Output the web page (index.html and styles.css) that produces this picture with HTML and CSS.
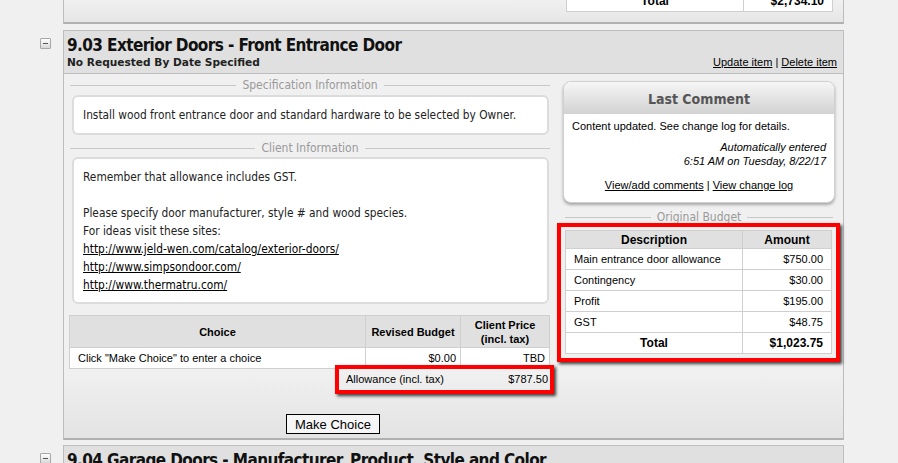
FILE: index.html
```html
<!DOCTYPE html>
<html lang="en">
<head>
    <meta charset="UTF-8">
    <title>Selections - Exterior Doors</title>
    <link rel="stylesheet" href="styles.css">
</head>
<body>

    <div class="item">
        <div class="gutter"></div>
        <div class="panel panel-prev">
            <div class="prev-body">
                <table class="budget">
                    <tr class="total-row">
                        <td class="desc">Total</td>
                        <td class="num">$2,734.10</td>
                    </tr>
                </table>
            </div>
        </div>
    </div>

    <div class="item">
        <div class="gutter"><span class="toggle"></span></div>
        <div class="panel">
            <div class="panel-head">
                <div>
                    <h2 class="item-title">9.03 Exterior Doors - Front Entrance Door</h2>
                    <div class="item-sub">No Requested By Date Specified</div>
                </div>
                <div class="item-links"><a href="#">Update item</a> | <a href="#">Delete item</a></div>
            </div>

            <div class="panel-body">
                <div class="col-left">
                    <div class="legend">Specification Information</div>
                    <div class="info-box spec-box">
                        Install wood front entrance door and standard hardware to be selected by Owner.
                    </div>

                    <div class="legend legend-client">Client Information</div>
                    <div class="info-box client-box">
                        <p>Remember that allowance includes GST.</p>
                        <p>&nbsp;</p>
                        <p>Please specify door manufacturer, style # and wood species.</p>
                        <p>For ideas visit these sites:</p>
                        <p><a href="#">http://www.jeld-wen.com/catalog/exterior-doors/</a></p>
                        <p><a href="#">http://www.simpsondoor.com/</a></p>
                        <p><a href="#">http://www.thermatru.com/</a></p>
                    </div>

                    <table class="choices">
                        <tr>
                            <th class="c-choice">Choice</th>
                            <th class="c-budget">Revised Budget</th>
                            <th class="c-price">Client Price<br>(incl. tax)</th>
                        </tr>
                        <tr>
                            <td>Click "Make Choice" to enter a choice</td>
                            <td class="num">$0.00</td>
                            <td class="num">TBD</td>
                        </tr>
                    </table>

                    <div class="allowance highlight">
                        <span>Allowance (incl. tax)</span>
                        <span>$787.50</span>
                    </div>

                    <button class="make-choice">Make Choice</button>
                </div>

                <div class="col-right">
                    <div class="comment-box">
                        <div class="comment-head">Last Comment</div>
                        <div class="comment-body">
                            <p>Content updated. See change log for details.</p>
                            <p class="comment-meta">Automatically entered<br>6:51 AM on Tuesday, 8/22/17</p>
                            <p class="comment-links"><a href="#">View/add comments</a> | <a href="#">View change log</a></p>
                        </div>
                    </div>

                    <div class="legend legend-budget">Original Budget</div>
                    <div class="highlight budget-wrap">
                        <table class="budget">
                            <tr>
                                <th class="desc">Description</th>
                                <th>Amount</th>
                            </tr>
                            <tr><td>Main entrance door allowance</td><td class="num">$750.00</td></tr>
                            <tr><td>Contingency</td><td class="num">$30.00</td></tr>
                            <tr><td>Profit</td><td class="num">$195.00</td></tr>
                            <tr><td>GST</td><td class="num">$48.75</td></tr>
                            <tr class="total-row"><td class="desc">Total</td><td class="num">$1,023.75</td></tr>
                        </table>
                    </div>
                </div>
            </div>
        </div>
    </div>

    <div class="item item-next">
        <div class="gutter"><span class="toggle"></span></div>
        <div class="panel">
            <div class="panel-head">
                <h2 class="item-title">9.04 Garage Doors - Manufacturer, Product, Style and Color</h2>
            </div>
        </div>
    </div>

</body>
</html>
```

FILE: styles.css
```css
body {
    margin: 0;
    background-color: #f0f0f0;
    font-family: "Liberation Sans", Arial, sans-serif;
    font-size: 11px;
    color: #000;
}
a {
    color: #000;
}
p {
    margin: 0;
}

/* item rows */
.item {
    display: flex;
    align-items: flex-start;
}
.item + .item {
    margin-top: 6px;
}
.item-next {
    margin-top: 5px !important;
}
.gutter {
    width: 63px;
    flex: none;
    display: flex;
    justify-content: flex-end;
    padding: 8px 12px 0 0;
    box-sizing: border-box;
}
.toggle {
    width: 11px;
    height: 11px;
    box-sizing: border-box;
    border: 1px solid #a8a8a8;
    border-radius: 1px;
    background: linear-gradient(#ffffff, #d8d8d8);
    display: flex;
    align-items: center;
    justify-content: center;
}
.toggle::before {
    content: "";
    width: 5px;
    height: 1px;
    background: #555;
}
.panel {
    width: 781px;
    box-sizing: border-box;
    border: 1px solid #bdbdbd;
    border-bottom: 2px solid #b0b0b0;
    background: #f0f0f0;
}
.panel-prev {
    border-top: none;
}
.prev-body {
    height: 22px;
    overflow: hidden;
    display: flex;
    justify-content: flex-end;
    align-items: flex-end;
    padding: 0 10px 10px 0;
    box-sizing: border-box;
    background: linear-gradient(#f0f0f0, #e6e6e6);
}

/* header */
.panel-head {
    background: #e0e0e0;
    border-bottom: 1px solid #bdbdbd;
    display: flex;
    justify-content: space-between;
    align-items: flex-end;
    padding: 3px 6px 4px 3px;
}
.item-title {
    margin: 0;
    font-family: "DejaVu Sans Condensed", "DejaVu Sans", sans-serif;
    font-stretch: condensed;
    font-size: 17px;
    letter-spacing: -0.6px;
    line-height: 22px;
    font-weight: bold;
    color: #111;
}
.item-sub {
    font-family: "DejaVu Sans", sans-serif;
    font-size: 10.6px;
    font-weight: bold;
    line-height: 13px;
    color: #222;
}
.item-links {
    line-height: 13px;
}

/* body */
.panel-body {
    display: flex;
    gap: 13px;
    padding: 4px 8px 4px 6px;
    background: linear-gradient(#f0f0f0 82%, #e3e3e3);
}
.col-left {
    width: 480px;
    flex: none;
}
.col-right {
    width: 272px;
    flex: none;
    padding-top: 3px;
}
.legend {
    display: flex;
    align-items: center;
    gap: 6px;
    color: #9a9a9a;
    font-family: "DejaVu Sans Condensed", "DejaVu Sans", sans-serif;
    font-stretch: condensed;
    font-size: 12px;
    line-height: 14px;
}
.legend::before,
.legend::after {
    content: "";
    flex: 1;
    height: 1px;
    background: #c8c8c8;
}
.legend-client {
    margin-top: 6px;
}
.legend-budget {
    margin: 7px 2px 0;
}
.info-box {
    background: #fff;
    border: 2px solid #dcdcdc;
    border-radius: 6px;
    margin: 3px 1px 0 2px;
    padding: 11px 9px;
    font-family: "DejaVu Sans Condensed", "DejaVu Sans", sans-serif;
    font-stretch: condensed;
    font-size: 11.8px;
    line-height: 14px;
    color: #222;
}
.client-box {
    margin-top: 2px;
    padding: 9px 9px 8px;
    line-height: 18px;
}

/* choice table */
.choices,
.budget {
    border-collapse: collapse;
    font-size: 11px;
}
.choices {
    width: 481px;
    margin: 11px 0 0 -1px;
}
.choices th,
.choices td,
.budget th,
.budget td {
    border: 1px solid #cfcfcf;
}
.choices th {
    background: #e0e0e0;
    height: 31px;
    line-height: 14px;
    font-weight: bold;
    padding: 0 4px;
}
.choices td {
    background: #fff;
    height: 20px;
    padding: 0 8px;
}
.c-budget {
    width: 86px;
}
.c-price {
    width: 80px;
}
.num {
    text-align: right;
}
.choices .num {
    padding-right: 4px;
}

/* red annotation boxes */
.highlight {
    position: relative;
}
.highlight::after {
    content: "";
    position: absolute;
    top: -4px;
    left: -4px;
    right: -4px;
    bottom: -4px;
    border: 4px solid #f00;
    box-shadow: 2px 2px 3px rgba(0, 0, 0, 0.75);
    pointer-events: none;
}
.allowance {
    width: 211px;
    margin-left: auto;
    display: flex;
    justify-content: space-between;
    line-height: 21px;
    padding: 0 2px 0 7px;
    box-sizing: border-box;
}
.budget-wrap {
    margin: 6px 3px 0 2px;
}
.budget-wrap::after {
    top: -7px;
    left: -8px;
    right: -8px;
    bottom: -8px;
}
.make-choice {
    display: block;
    margin: 24px 0 0 216px;
    height: 20px;
    padding: 0 8px;
    font-family: "Liberation Sans", Arial, sans-serif;
    font-size: 13px;
    background: #f6f6f6;
    border: 1px solid #000;
    border-radius: 0;
    color: #000;
}

/* last comment */
.comment-box {
    background: #fff;
    border: 1px solid #d0d0d0;
    border-radius: 8px;
    box-shadow: 0 2px 3px rgba(0, 0, 0, 0.3);
    overflow: hidden;
}
.comment-head {
    height: 32px;
    line-height: 34px;
    text-align: center;
    font-family: "DejaVu Sans Condensed", "DejaVu Sans", sans-serif;
    font-stretch: condensed;
    font-size: 14px;
    font-weight: bold;
    color: #555;
    background: linear-gradient(#f6f6f6, #d2d2d2);
}
.comment-body {
    padding: 5px 8px 10px;
    line-height: 14px;
}
.comment-meta {
    margin-top: 7px;
    text-align: right;
    font-style: italic;
}
.comment-links {
    margin-top: 10px;
    text-align: center;
}

/* budget table */
.budget {
    width: 267px;
    background: #fff;
}
.budget th {
    background: #e0e0e0;
    height: 15px;
    padding: 1px 4px;
    font-size: 12px;
}
.budget td {
    height: 20px;
    padding: 0 8px;
}
.budget .desc {
    width: 177px;
    box-sizing: border-box;
}
.total-row td {
    font-weight: bold;
}
.total-row .desc {
    text-align: center;
    font-size: 12px;
}
.total-row .num {
    font-size: 12px;
}
```
